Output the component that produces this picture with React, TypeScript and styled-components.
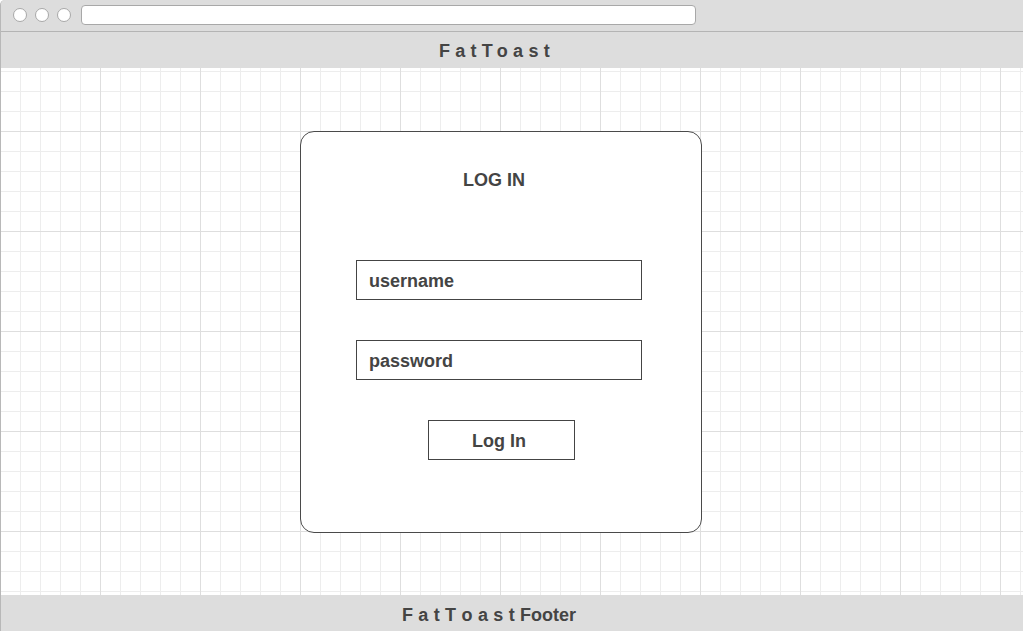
import React from "react";
import styled, { createGlobalStyle } from "styled-components";

const GlobalStyle = createGlobalStyle`
  html, body {
    margin: 0;
    padding: 0;
    width: 100%;
    height: 100%;
    overflow: hidden;
    background: #ffffff;
  }
  #root {
    width: 100%;
    height: 100%;
  }
  * {
    box-sizing: border-box;
  }
`;

const Window = styled.div`
  width: 1023px;
  height: 631px;
  display: flex;
  flex-direction: column;
  font-family: "Liberation Sans", Arial, Helvetica, sans-serif;
  color: #444444;
  border-left: 1px solid #b8b8b8;
  border-top-left-radius: 5px;
  overflow: hidden;
  background: #dcdcdc;
`;

const Chrome = styled.div`
  height: 32px;
  flex: 0 0 32px;
  display: flex;
  align-items: center;
  padding: 0 0 1px 12px;
  gap: 8px;
  background: #dddddd;
  border-bottom: 1px solid #b4b4b4;
`;

const Dot = styled.span`
  width: 14px;
  height: 14px;
  border-radius: 50%;
  background: #ffffff;
  border: 1px solid #a8a8a8;
  flex: 0 0 14px;
`;

const AddressBar = styled.div`
  margin-left: 2px;
  width: 615px;
  height: 20px;
  background: #ffffff;
  border: 1px solid #a8a8a8;
  border-radius: 4px;
`;

const Header = styled.header`
  height: 36px;
  flex: 0 0 36px;
  display: flex;
  align-items: center;
  justify-content: center;
  background: #dddddd;
  font-size: 18px;
  font-weight: bold;
  letter-spacing: 5.3px;
  padding: 2px 30px 0 0;
`;

const Canvas = styled.main`
  flex: 1 1 auto;
  background-color: #ffffff;
  background-image:
    linear-gradient(to right, #dedede 1px, transparent 1px),
    linear-gradient(to bottom, #dedede 1px, transparent 1px),
    linear-gradient(to right, #ededed 1px, transparent 1px),
    linear-gradient(to bottom, #ededed 1px, transparent 1px);
  background-size: 100px 100px, 100px 100px, 20px 20px, 20px 20px;
  background-position: -1px 63px, -1px 63px, -1px 3px, -1px 3px;
  padding: 63px 0 0 299px;
`;

const Card = styled.section`
  width: 402px;
  height: 402px;
  background: #ffffff;
  border: 1px solid #4a4a4a;
  border-radius: 14px;
  display: flex;
  flex-direction: column;
  align-items: flex-start;
  padding: 38px 0 0 55px;
`;

const Title = styled.h1`
  margin: 0 0 0 107px;
  font-size: 18px;
  line-height: 21px;
  font-weight: bold;
  color: #444444;
`;

const Field = styled.input<{ $top: number }>`
  width: 286px;
  height: 40px;
  margin-top: ${(p) => p.$top}px;
  border: 1px solid #444444;
  border-radius: 0;
  background: #ffffff;
  padding: 2px 0 0 12px;
  font-family: "Liberation Sans", Arial, Helvetica, sans-serif;
  font-size: 18px;
  font-weight: bold;
  color: #444444;
  outline: none;
  &::placeholder {
    color: #444444;
    opacity: 1;
  }
`;

const Button = styled.button`
  margin: 40px 0 0 72px;
  width: 147px;
  height: 40px;
  border: 1px solid #444444;
  border-radius: 0;
  background: #ffffff;
  font-family: "Liberation Sans", Arial, Helvetica, sans-serif;
  font-size: 18px;
  font-weight: bold;
  color: #444444;
  padding: 2px 5px 0 0;
  cursor: pointer;
`;

const Footer = styled.footer`
  height: 36px;
  flex: 0 0 36px;
  display: flex;
  align-items: center;
  justify-content: center;
  background: #dddddd;
  font-size: 18px;
  font-weight: bold;
  word-spacing: 0.4px;
  padding: 5px 46px 0 0;
  white-space: pre;
`;

export default function App() {
  return (
    <>
      <GlobalStyle />
      <Window>
        <Chrome>
          <Dot />
          <Dot />
          <Dot />
          <AddressBar />
        </Chrome>
        <Header>FatToast</Header>
        <Canvas>
          <Card>
            <Title>LOG IN</Title>
            <Field $top={69} placeholder="username" readOnly />
            <Field $top={40} placeholder="password" readOnly />
            <Button type="button">Log In</Button>
          </Card>
        </Canvas>
        <Footer>F a t T o a s t Footer</Footer>
      </Window>
    </>
  );
}
